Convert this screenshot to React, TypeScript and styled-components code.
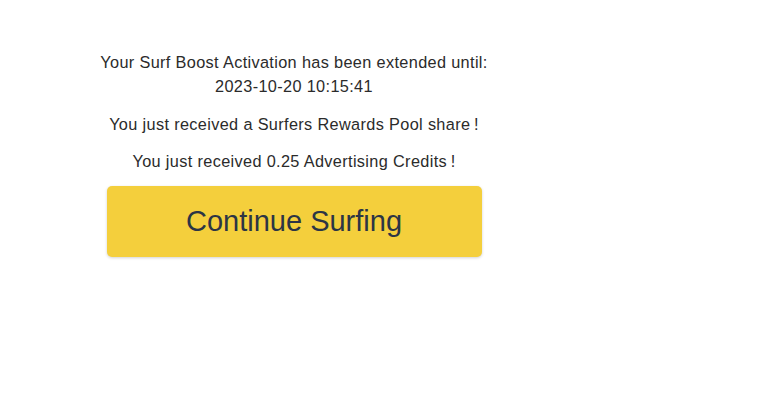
import styled, { createGlobalStyle } from 'styled-components';

const GlobalStyle = createGlobalStyle`
  html, body {
    margin: 0;
    padding: 0;
    background: #ffffff;
  }
  body {
    font-family: 'Liberation Sans', Arial, sans-serif;
    color: #2b2b2b;
  }
`;

const Page = styled.div`
  width: 757px;
  height: 400px;
  padding-top: 50px;
  box-sizing: border-box;
`;

const Panel = styled.div`
  width: 400px;
  margin-left: 94px;
  display: flex;
  flex-direction: column;
  align-items: center;
  text-align: center;
`;

const Message = styled.p<{ $gap?: number }>`
  margin: ${(p) => p.$gap ?? 0}px 0 0;
  font-size: 16.3px;
  line-height: 24px;
  letter-spacing: 0.35px;
  color: #2b2b2b;
  white-space: nowrap;
`;

const ContinueButton = styled.button`
  margin-top: 13px;
  width: 375px;
  height: 71px;
  border: none;
  border-radius: 5px;
  background: #f4cf3c;
  box-shadow: 0 1px 3px rgba(0, 0, 0, 0.18);
  font-family: 'Liberation Sans', Arial, sans-serif;
  font-size: 29px;
  color: #2c3545;
  cursor: pointer;
`;

const App = () => {
  return (
    <Page>
      <GlobalStyle />
      <Panel>
        <Message>
          Your Surf Boost Activation has been extended until:
          <br />
          2023-10-20 10:15:41
        </Message>
        <Message $gap={14}>You just received a Surfers Rewards Pool share&#8201;!</Message>
        <Message $gap={13}>You just received 0.25 Advertising Credits&#8201;!</Message>
        <ContinueButton>Continue Surfing</ContinueButton>
      </Panel>
    </Page>
  );
};

export default App;
